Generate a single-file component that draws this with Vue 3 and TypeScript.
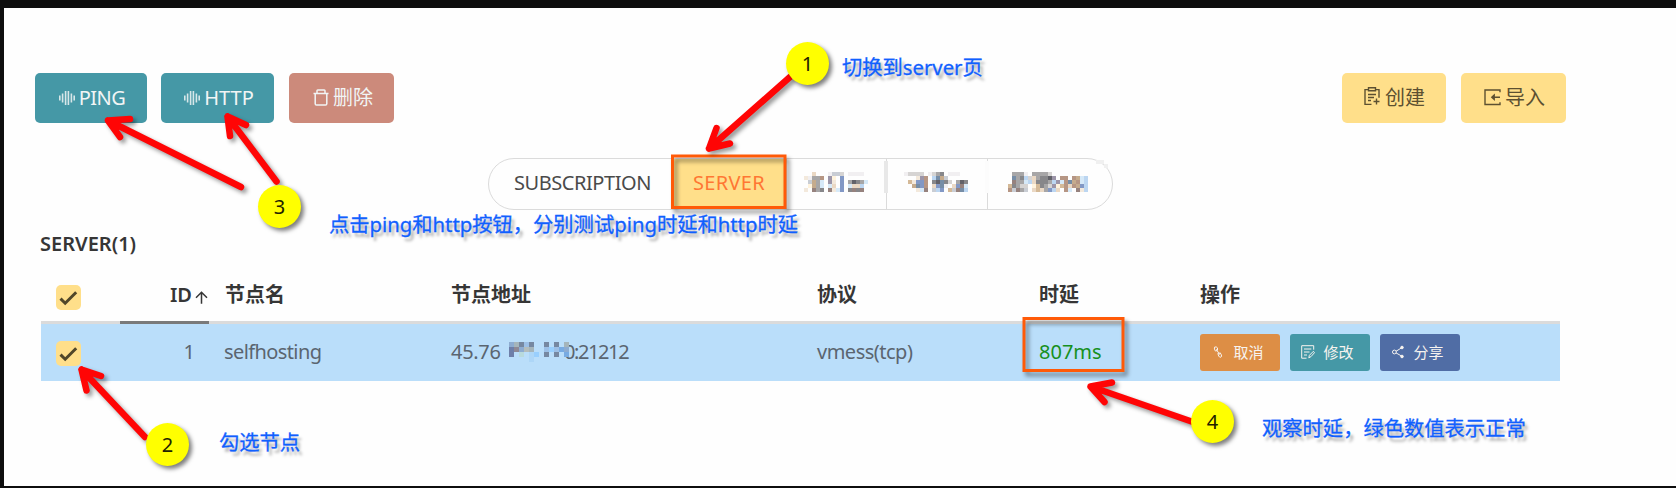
<script setup lang="ts">
interface Cell { x: number; y: number; c: string }

const palette: Record<string, string> = {
  a: '#f3e9dc', b: '#c9cdd4', c: '#a7a6a7', d: '#87878a', e: '#626269',
  f: '#ead8c4', g: '#b69684', h: '#96827e', i: '#9c95a8', j: '#8298c5',
  k: '#d6e9f8', l: '#bcd6f1', m: '#d6d4d3', n: '#f1eff1', o: '#d4b997',
  p: '#768da6', q: '#c5ab8d', r: '#fff3dd',
}

function mosaic(x0: number, y0: number, size: number, rows: string[], pal = palette): Cell[] {
  return rows.flatMap((row, r) =>
    [...row].flatMap((ch, k) => (ch === '.' ? [] : [{ x: x0 + k * size, y: y0 + r * size, c: pal[ch] }])))
}

const tabCells: Cell[] = [
  ...mosaic(804, 172, 4, [
    '..f...nbbm.nnnn.',
    'anccg.ir.j......',
    '.bqck.ia.j.cedck',
    '.rqck.kf.j.kffl.',
    'a.hcd.hakj.dhdh.',
  ]),
  ...mosaic(904, 172, 4, [
    'nmmmm.nmcd.nnn..',
    '...aig.lpqb.....',
    '.oajjg.depdm.ced',
    '..qpjg.fjpn.fjhk',
    '...akh.blj.obhpl',
  ]),
  ...mosaic(1008, 172, 4, [
    '.cccn.ccccm.........',
    '.pcdlmfcddei.gg.gqkl',
    '.hccklfdddclikgpqgkl',
    'odcmm.rodcmirogfgqjl',
    'gbhcb.fofcjlf.gk.hal',
  ]),
]

const addressPalette: Record<string, string> = {
  a: '#8dacd1', b: '#a5b5bb', c: '#7688a1', d: '#9dc0e6', e: '#6e7fa9',
  f: '#8e8995', g: '#b4bdbc', h: '#99cffd', i: '#b8dadd', j: '#78abe2', k: '#add6f7',
}
const addressCells = mosaic(509, 342, 5, [
  'abcdc..c.c.b',
  'efagb..dhdja',
  'e.i.kh.c.c.j',
  '....k.......',
], addressPalette)

const arrows = [
  'M241 187L108 120.5M130 119L108 120.5L120 137',
  'M276.5 181.5L227.5 116.5M246 125L227.5 116.5L230 136',
  'M790 77L709 148.5M716.5 128L709 148.5L730 143.5',
  'M145 437L81.5 369.5M101 376L81.5 369.5L86.5 390.5',
  'M1193 422L1090.5 386.5M1112 382.5L1090.5 386.5L1104.5 402',
]
const headers = ['节点名', '节点地址', '协议', '时延', '操作']
</script>

<template>
  <div class="page">
    <div class="toolbar">
      <button class="btn teal ping">
        <svg width="16" height="16" viewBox="0 0 16 16"><path class="wave" d="M.8 5.5v5M3.6 3.5v9M6.6 1v14M9.4 1v14M12.4 3.5v9M15.2 5.5v5" /></svg><span>PING</span>
      </button>
      <button class="btn teal http">
        <svg width="16" height="16" viewBox="0 0 16 16"><path class="wave" d="M.8 5.5v5M3.6 3.5v9M6.6 1v14M9.4 1v14M12.4 3.5v9M15.2 5.5v5" /></svg><span>HTTP</span>
      </button>
      <button class="btn red remove">
        <svg width="16" height="17" viewBox="0 0 16 17"><path class="line" d="M.5 4.5h15M4 4.5V1.8Q4 1 4.8 1h6.4q.8 0 .8.8v2.7M2.2 4.5v10.2q0 1.3 1.3 1.3h9q1.3 0 1.3-1.3V4.5" /></svg><span>删除</span>
      </button>
      <div class="spacer"></div>
      <button class="btn yellow create">
        <svg width="17" height="19" viewBox="0 0 17 19"><path class="line thin" d="M4.5 2.6H1v14.8h6.5M11.5 2.6H15v8.2M4.5.8h7v3h-7zM4 7.5h8M4 10.5h6M4 13.5h3M9.5 14.5h6M12.5 11.5v6" /></svg><span>创建</span>
      </button>
      <button class="btn yellow import">
        <svg width="17" height="17" viewBox="0 0 17 17"><path class="line thin" d="M16 3.2V1H1v14.5h15v-2.2M16 8.2H8M10.2 6L7.8 8.2l2.4 2.2z" /></svg><span>导入</span>
      </button>
    </div>

    <nav class="tabs">
      <a class="tab sub">SUBSCRIPTION</a>
      <a class="tab active">SERVER</a>
      <a class="tab t3"></a>
      <a class="tab t4"></a>
      <a class="tab t5"></a>
    </nav>

    <h2 class="title">SERVER(1)</h2>

    <div class="table">
      <div class="row head">
        <div class="check-cell"><span class="check"><svg width="19" height="16" viewBox="0 0 19 16"><path d="M1.5 8.6L6.2 13.2 17.2 2.2" /></svg></span></div>
        <div class="id-cell">ID<svg class="sort" width="13" height="13" viewBox="0 0 13 13"><path d="M6.5 12.7V1.5M1 6.7L6.5 1.2 12 6.7" /></svg></div>
        <div v-for="h in headers" :key="h" class="cell">{{ h }}</div>
      </div>
      <div class="row body">
        <div class="check-cell"><span class="check"><svg width="19" height="16" viewBox="0 0 19 16"><path d="M1.5 8.6L6.2 13.2 17.2 2.2" /></svg></span></div>
        <div class="id-cell num">1</div>
        <div class="cell name">selfhosting</div>
        <div class="cell addr"><span class="host">45.76</span><span class="port">0:21212</span></div>
        <div class="cell proto">vmess(tcp)</div>
        <div class="cell delay">807ms</div>
        <div class="cell actions">
          <button class="small orange"><svg width="14" height="14" viewBox="0 0 14 14"><path d="M6.2 5.5L4.5 6.1Q2.8 4.3 3.5 2.2q1.8-1 3 .7L6.5 5.2M5.2 4.2L8.7 9.6M7.2 8.8l2-1 1.1 2q.8 1.6-.4 2.4-1.4.4-2.2-1.2L6.8 8.4" /></svg><span>取消</span></button>
          <button class="small teal"><svg width="14" height="14" viewBox="0 0 14 14"><path d="M5.5 13.2H.7V.7h12v4M3 4h7.3M3 7h5.5M3 10h3M7.8 12.8l.6-2.5 4-4 1.1 1.4-3.6 4z" /></svg><span>修改</span></button>
          <button class="small blue"><svg width="14" height="14" viewBox="0 0 14 14"><path d="M10.3 3L5 6.3M5 7.9l5.3 3" /><circle cx="3.4" cy="7" r="1.9" /><circle class="dot" cx="11" cy="2.5" r="1.3" /><circle class="dot" cx="11" cy="11.5" r="1.3" /></svg><span>分享</span></button>
        </div>
      </div>
    </div>

    <svg class="overlay" width="1676" height="488" viewBox="0 0 1676 488">
      <rect class="smudge" x="884" y="161" width="4" height="32" />
      <rect class="clear" x="985" y="161" width="4" height="32" />
      <path class="smudge light" d="M1096 160h8v4h4v4h-4v-4h-8zM1104 164h4v4h-4z" />
      <g shape-rendering="crispEdges">
        <rect v-for="(p, i) in tabCells" :key="'t' + i" :x="p.x" :y="p.y" width="4" height="4" :fill="p.c" />
        <rect v-for="(p, i) in addressCells" :key="'a' + i" :x="p.x" :y="p.y" width="5" height="5" :fill="p.c" />
      </g>
      <g class="frames">
        <rect x="672.5" y="156" width="112.5" height="51.5" />
        <rect x="1024" y="318.5" width="99" height="52" />
      </g>
      <path v-for="a in arrows" :key="a" class="arrow" :d="a" />
    </svg>

    <span class="badge b1">1</span>
    <span class="badge b2">2</span>
    <span class="badge b3">3</span>
    <span class="badge b4">4</span>
    <span class="note n1">切换到server页</span>
    <span class="note n2">勾选节点</span>
    <span class="note n3">点击ping和http按钮，分别测试ping时延和http时延</span>
    <span class="note n4">观察时延，绿色数值表示正常</span>
  </div>
</template>

<style>
body { background: #fff; }
</style>

<style scoped>
.page {
  position: relative;
  box-sizing: border-box;
  width: 1676px;
  height: 488px;
  border: solid #0e0e0e;
  border-width: 8px 0 2px 4px;
  background: #fefefe;
  overflow: hidden;
  font: 20px/28px "Noto Sans", "Noto Sans CJK SC", sans-serif;
  color: #363636;
}
.toolbar { display: flex; height: 50px; margin: 65px 110px 0 31px; }
.btn {
  box-sizing: border-box;
  display: flex;
  align-items: center;
  justify-content: center;
  height: 50px;
  padding: 0 0 1px;
  border: 0;
  border-radius: 5px;
  font: inherit;
  color: #f1f5f5;
  gap: 4px;
}
.btn svg, .small svg { flex: none; fill: none; stroke: currentColor; }
.wave { stroke-width: 1.6; opacity: .85; }
.line { stroke-width: 1.5; }
.thin { stroke-width: 1.4; }
.ping { width: 112px; margin-right: 14px; padding-left: 2px; letter-spacing: -.5px; }
.http { width: 113px; margin-right: 15px; padding-left: 3px; }
.remove { width: 105px; padding-left: 3px; }
.create { width: 104px; margin-right: 15px; padding-left: 1px; }
.create svg { margin-top: -2px; }
.import { width: 105px; padding-left: 2px; }
.import svg { margin-top: -1px; }
.spacer { flex: 1; }
.teal { background: #4598a6; }
.red { background: #cc8a7b; }
.yellow { background: #ffdf8a; color: #5c5031; }
.tabs {
  box-sizing: border-box;
  display: flex;
  width: 625px;
  height: 52px;
  margin: 35px 0 0 484px;
  border: 1px solid #dbdbdb;
  border-radius: 26px;
  overflow: hidden;
}
.tab {
  box-sizing: border-box;
  display: flex;
  align-items: center;
  justify-content: center;
  padding-bottom: 2px;
  border-right: 1px solid #dbdbdb;
  color: #4a4a4a;
}
.sub { width: 184px; padding-left: 4px; letter-spacing: -.45px; }
.active { width: 114px; padding-right: 1px; background: #ffdf8a; color: #ff7733; letter-spacing: .3px; }
.t3 { width: 100px; }
.t4 { width: 101px; }
.t5 { flex: 1; border: 0; }
.title { margin: 19px 0 0 36px; font-size: 20px; line-height: 30px; font-weight: 600; }
.table { width: 1519px; margin: 9px 0 0 37px; }
.row {
  display: grid;
  grid-template-columns: 79px 89px 226px 366px 222px 161px 376px;
}
.head { height: 56px; font-weight: 700; }
.head > div { box-sizing: border-box; border-bottom: 3px solid #dbdbdb; padding-top: 13px; }
.head > .id-cell { border-color: #7a7a7a; }
.head > .check-cell { padding-top: 17px; }
.body { height: 57px; background: #badefa; color: #5a6570; }
.body > div { padding-top: 14px; }
.check-cell { padding-left: 15px; }
.body > .check-cell { padding-top: 17px; }
.check {
  display: flex;
  align-items: center;
  justify-content: center;
  width: 25px;
  height: 25px;
  border-radius: 5px;
  background: #ffdf8a;
}
.check svg { fill: none; stroke: #514729; stroke-width: 3; }
.id-cell { display: flex; justify-content: flex-end; align-items: flex-start; font-weight: 600; }
.sort { margin: 10px 1px 0 3px; fill: none; stroke: #363636; stroke-width: 1.5; }
.body > .num { padding-right: 14px; font-weight: 400; }
.cell { padding-left: 16px; white-space: nowrap; }
.name { padding-left: 15px; letter-spacing: -.6px; }
.proto { letter-spacing: -.5px; }
.addr { display: flex; }
.host { width: 51px; letter-spacing: -.3px; }
.port { margin-left: 62px; letter-spacing: -1.4px; }
.delay { color: #169020; }
.body > .actions { display: flex; gap: 10px; padding-top: 10px; }
.small {
  display: flex;
  align-items: center;
  justify-content: center;
  gap: 8px;
  width: 80px;
  height: 37px;
  padding: 0 5px 1px 0;
  border: 0;
  border-radius: 3px;
  font: 15px/20px "Noto Sans", "Noto Sans CJK SC", sans-serif;
  color: #f7f3ef;
}
.small.orange { background: #dd8e45; }
.small.teal { background: #4598a6; }
.small.blue { background: #506da5; }
.small .dot { fill: currentColor; }
.overlay { position: absolute; left: -4px; top: -8px; }
.smudge { fill: #e8e8e8; }
.light { fill: #f0f0f0; }
.clear { fill: #fcfcfc; }
.frames rect { fill: none; stroke: #ff5a08; stroke-width: 3; filter: drop-shadow(3px 4px 2px rgba(0, 0, 0, .45)); }
.arrow {
  fill: none;
  stroke: #ff0505;
  stroke-width: 6.5;
  stroke-linecap: round;
  stroke-linejoin: round;
  filter: drop-shadow(3px 3px 2px rgba(0, 0, 0, .4));
}
.badge {
  position: absolute;
  width: 43px;
  height: 43px;
  border-radius: 50%;
  background: #ff0;
  box-shadow: 3px 3px 4px rgba(0, 0, 0, .5);
  color: #222200;
  text-align: center;
  line-height: 43px;
}
.b1 { left: 782px; top: 34px; }
.b2 { left: 142px; top: 415px; }
.b3 { left: 254px; top: 177px; }
.b4 { left: 1187px; top: 392px; }
.note {
  position: absolute;
  white-space: nowrap;
  color: #1060ff;
  font-size: 20.3px;
  -webkit-text-stroke: .3px #1060ff;
  text-shadow: 3px 4px 3px rgba(0, 0, 0, .35);
}
.n1 { left: 838px; top: 45px; }
.n2 { left: 215px; top: 420px; }
.n3 { left: 325px; top: 202px; }
.n4 { left: 1258px; top: 406px; }
</style>
